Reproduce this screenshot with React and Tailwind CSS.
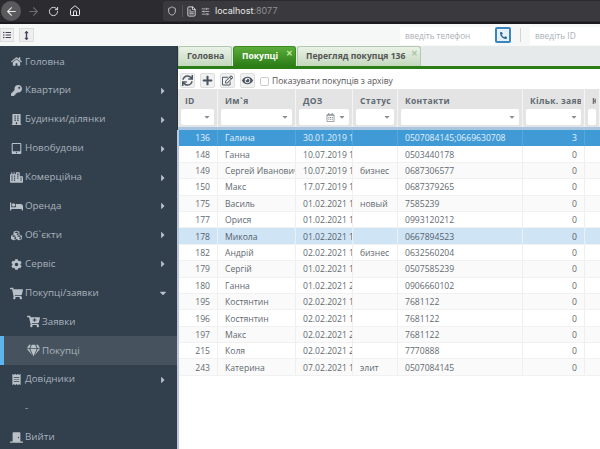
import {
  FaHome, FaKey, FaBuilding, FaTabletAlt, FaCity, FaBed, FaCubes, FaCog,
  FaShoppingCart, FaCartPlus, FaGem, FaReceipt, FaDoorClosed, FaCaretRight, FaCaretDown,
  FaSync, FaPlus, FaRegEdit, FaEye, FaRegCalendarAlt, FaPhone, FaListUl, FaArrowsAltV,
} from "react-icons/fa";
import { ArrowLeft, ArrowRight, RotateCw, Home, Shield, FileText, SlidersHorizontal } from "lucide-react";

const menu = [
  { label: "Головна", icon: FaHome },
  { label: "Квартири", icon: FaKey, arrow: true },
  { label: "Будинки/ділянки", icon: FaBuilding, arrow: true },
  { label: "Новобудови", icon: FaTabletAlt, arrow: true },
  { label: "Комерційна", icon: FaCity, arrow: true, wide: true },
  { label: "Оренда", icon: FaBed, arrow: true, wide: true },
  { label: "Об`єкти", icon: FaCubes, arrow: true },
  { label: "Сервіс", icon: FaCog, arrow: true },
  { label: "Покупці/заявки", icon: FaShoppingCart, open: true, wide: true },
  { label: "Заявки", icon: FaCartPlus, sub: true, wide: true },
  { label: "Покупці", icon: FaGem, sub: true, active: true, wide: true },
  { label: "Довідники", icon: FaReceipt, arrow: true },
  { label: "-" },
  { label: "Вийти", icon: FaDoorClosed, wide: true },
];

const rows = [
  ["136", "Галина", "30.01.2019 1", "", "0507084145;0669630708", "3"],
  ["148", "Ганна", "10.07.2019 1", "", "0503440178", "0"],
  ["149", "Сергей Иванович", "10.07.2019 1", "бизнес", "0687306577", "0"],
  ["150", "Макс", "17.07.2019 1", "", "0687379265", "0"],
  ["175", "Василь", "01.02.2021 1", "новый", "7585239", "0"],
  ["177", "Орися", "01.02.2021 1", "", "0993120212", "0"],
  ["178", "Микола", "01.02.2021 1", "", "0667894523", "0"],
  ["182", "Андрій", "02.02.2021 1", "бизнес", "0632560204", "0"],
  ["179", "Сергій", "01.02.2021 1", "", "0507585239", "0"],
  ["180", "Ганна", "01.02.2021 2", "", "0906660102", "0"],
  ["195", "Костянтин", "02.02.2021 1", "", "7681122", "0"],
  ["196", "Костянтин", "02.02.2021 1", "", "7681122", "0"],
  ["197", "Макс", "02.02.2021 2", "", "7681122", "0"],
  ["215", "Коля", "02.02.2021 2", "", "7770888", "0"],
  ["243", "Катерина", "07.02.2021 1", "элит", "0507084145", "0"],
];

const columns = [
  { title: "ID", width: "w-[40px]" },
  { title: "Им`я", width: "w-[78px]" },
  { title: "ДОЗ", width: "w-[57px]", calendar: true },
  { title: "Статус", width: "w-[45px]" },
  { title: "Контакти", width: "w-[125px]" },
  { title: "Кільк. заяв", width: "w-[62px]" },
  { title: "Кі", width: "w-[15px]", noArrow: true },
];

function MenuItem({ item }) {
  const Icon = item.icon;
  return (
    <div className={`relative flex items-center h-[28.9px] text-[9.8px] ${item.active ? "bg-[#46535f]" : ""} ${item.sub ? "pl-[24px]" : "pl-[7px]"}`}>
      {item.active && <div className="absolute left-0 top-0 bottom-0 w-[4px] bg-[#5cb5ee]" />}
      <span className={`w-[18px] flex justify-center text-[#b9c1c8] ${item.wide ? "text-[13px]" : "text-[11px]"}`}>{Icon && <Icon />}</span>
      <span className="text-[#a9b4bd]">{item.label}</span>
      {item.arrow && <FaCaretRight className="absolute left-[158px] text-[#b9c1c8] text-[10px]" />}
      {item.open && <FaCaretDown className="absolute left-[158px] text-[#b9c1c8] text-[10px]" />}
    </div>
  );
}

function Tab({ label, active, close, w }) {
  return (
    <div className={`relative h-[20px] mr-[1px] pl-[8px] rounded-t-[3px] border border-b-0 flex items-center text-[8.6px] font-bold ${w} ${active ? "bg-gradient-to-b from-[#5cad3a] to-[#2b7d16] border-[#3b8a22] text-white" : "bg-gradient-to-b from-[#e9f2e6] to-[#c5d8bf] border-[#b4c9ae] text-[#555]"}`}>
      {label}
      {close && <span className={`absolute right-[2px] top-[0px] text-[8px] font-bold ${active ? "text-[#bdf0a8]" : "text-[#a9c4a4]"}`}>✕</span>}
    </div>
  );
}

function ToolButton({ children }) {
  return (
    <div className="w-[15px] h-[15px] mr-[5px] flex items-center justify-center bg-[#f1f1f1] border border-[#dedede] rounded-[2px] text-[#4a5560] text-[11px]">
      {children}
    </div>
  );
}

export default function App() {
  return (
    <div className="w-[600px] h-[449px] overflow-hidden bg-white font-['Open_Sans',sans-serif] flex flex-col">
      {/* browser bar */}
      <div className="h-[24px] bg-[#2c2b2f] border-b-2 border-[#1b1b1d] flex items-center shrink-0">
        <div className="ml-[1px] w-[20px] h-[20px] rounded-full bg-[#5a595c] flex items-center justify-center">
          <ArrowLeft size={13} className="text-[#e8e8e8]" />
        </div>
        <ArrowRight size={13} className="ml-[6px] text-[#6d6c70]" />
        <RotateCw size={11} className="ml-[8px] text-[#e8e8e8]" />
        <Home size={12} className="ml-[10px] text-[#e8e8e8]" />
        <div className="ml-[82px] h-[20px] flex-1 bg-[#3a393d] rounded-l-[3px] flex items-center pl-[4px]">
          <Shield size={10} className="text-[#d6d6d6]" />
          <div className="ml-[5px] w-px h-[12px] bg-[#55545a]" />
          <FileText size={11} className="ml-[3px] text-[#e0e0e0]" />
          <SlidersHorizontal size={9} className="ml-[4px] text-[#d0d0d0]" />
          <span className="ml-[5px] text-[9px] text-[#e8e8e8] font-['Inter',sans-serif]">localhost<span className="text-[#8f8f93]">:8077</span></span>
        </div>
      </div>

      {/* app top bar */}
      <div className="h-[22px] bg-[#f6f7f7] flex items-center shrink-0 relative">
        <div className="w-[14px] h-[14px] bg-[#eeeeee] border border-[#dddddd] flex items-center justify-center text-[#445] text-[8px]"><FaListUl /></div>
        <div className="ml-[5px] w-[15px] h-[14px] bg-[#eeeeee] border border-[#dddddd] flex items-center justify-center text-[#445] text-[9px]"><FaArrowsAltV /></div>
        <div className="ml-[366px] w-[95px] h-[18px] mt-[2px] bg-white flex items-center pl-[5px] text-[8.2px] text-[#aab0b5]">введіть телефон</div>
        <div className="w-[16px] h-[16px] shrink-0 bg-[#e6f0f7] border-2 border-[#3a85bd] rounded-[2px] flex items-center justify-center text-[#2c6a9a] text-[7px]">
          <FaPhone className="rotate-90" />
        </div>
        <div className="ml-[9px] w-px h-[14px] bg-[#d5d5d5]" />
        <div className="ml-[9px] flex-1 h-[18px] mt-[2px] bg-white flex items-center pl-[5px] text-[8.4px] text-[#aab0b5]">введіть ID</div>
      </div>

      <div className="flex flex-1 min-h-0">
        {/* sidebar */}
        <div className="w-[178px] shrink-0 bg-[#323f4d] pt-[1.5px] border-r border-[#28333e]">
          {menu.map((item) => <MenuItem key={item.label} item={item} />)}
        </div>

        {/* content */}
        <div className="flex-1 min-w-0 flex flex-col">
          <div className="h-[23px] bg-[#e6eaea] shrink-0 flex items-end border-b-[3px] border-[#2b7d16]">
            <Tab label="Головна" w="w-[54px]" />
            <Tab label="Покупці" active close w="w-[63px]" />
            <Tab label="Перегляд покупця 136" close w="w-[124px]" />
          </div>
          <div className="h-[20px] shrink-0 flex items-center pl-[2px] pt-[2px]">
            <ToolButton><FaSync /></ToolButton>
            <ToolButton><FaPlus /></ToolButton>
            <ToolButton><FaRegEdit /></ToolButton>
            <ToolButton><FaEye /></ToolButton>
            <div className="w-[9px] h-[9px] mt-[3px] bg-white border border-[#cccccc] rounded-[2px]" />
            <span className="ml-[3px] mt-[3px] text-[8.5px] text-[#555]">Показувати покупців з архіву</span>
          </div>

          {/* grid header */}
          <div className="flex h-[41px] shrink-0 bg-[#e4e4e4] border-b-[3px] border-[#a9c6e0]">
            {columns.map((col) => (
              <div key={col.title} className={`${col.width} shrink-0 border-r border-[#f4f4f4] pt-[4px] px-[3px] overflow-hidden`}>
                <div className="px-[4px] text-[8.5px] font-bold text-[#5f6a72] tracking-[0.3px] whitespace-nowrap overflow-hidden h-[15px] leading-[15px]">{col.title}</div>
                <div className="h-[16px] mt-[1px] bg-white rounded-[2px] flex items-center justify-end pr-[3px] text-[#8a8f93] text-[8px]">
                  {col.calendar && <FaRegCalendarAlt className="mr-[3px] text-[9px]" />}
                  {!col.noArrow && <FaCaretDown />}
                </div>
              </div>
            ))}
          </div>

          {/* grid rows */}
          <div className="flex-1 border-l-[2px] border-[#bcc8dc] -ml-px">
            {rows.map((row, i) => {
              const selected = i === 0;
              const hover = i === 6;
              const bg = selected ? "bg-[#3f9ad6] text-[#e4f1fa]" : hover ? "bg-[#cfe5f6] text-[#55606a]" : i % 2 ? "bg-white text-[#626a70]" : "bg-[#fafafa] text-[#626a70]";
              const cell = `shrink-0 h-full pt-[2px] flex items-center overflow-hidden whitespace-nowrap border-r ${selected ? "border-[#57a7dc]" : "border-[#efefef]"}`;
              return (
                <div key={row[0]} className={`flex h-[16.4px] text-[8.6px] border-b ${selected ? "border-[#3f9ad6]" : "border-[#f1f1f1]"} ${bg}`}>
                  <div className={`${cell} w-[39px] justify-end pr-[7px]`}>{row[0]}</div>
                  <div className={`${cell} w-[78px] pl-[7px]`}>{row[1]}</div>
                  <div className={`${cell} w-[57px] pl-[7px]`}>{row[2]}</div>
                  <div className={`${cell} w-[45px] pl-[7px]`}>{row[3]}</div>
                  <div className={`${cell} w-[125px] pl-[7px]`}>{row[4]}</div>
                  <div className={`${cell} w-[62px] justify-end pr-[7px]`}>{row[5]}</div>
                  <div className="flex-1" />
                </div>
              );
            })}
          </div>
        </div>
      </div>
    </div>
  );
}
